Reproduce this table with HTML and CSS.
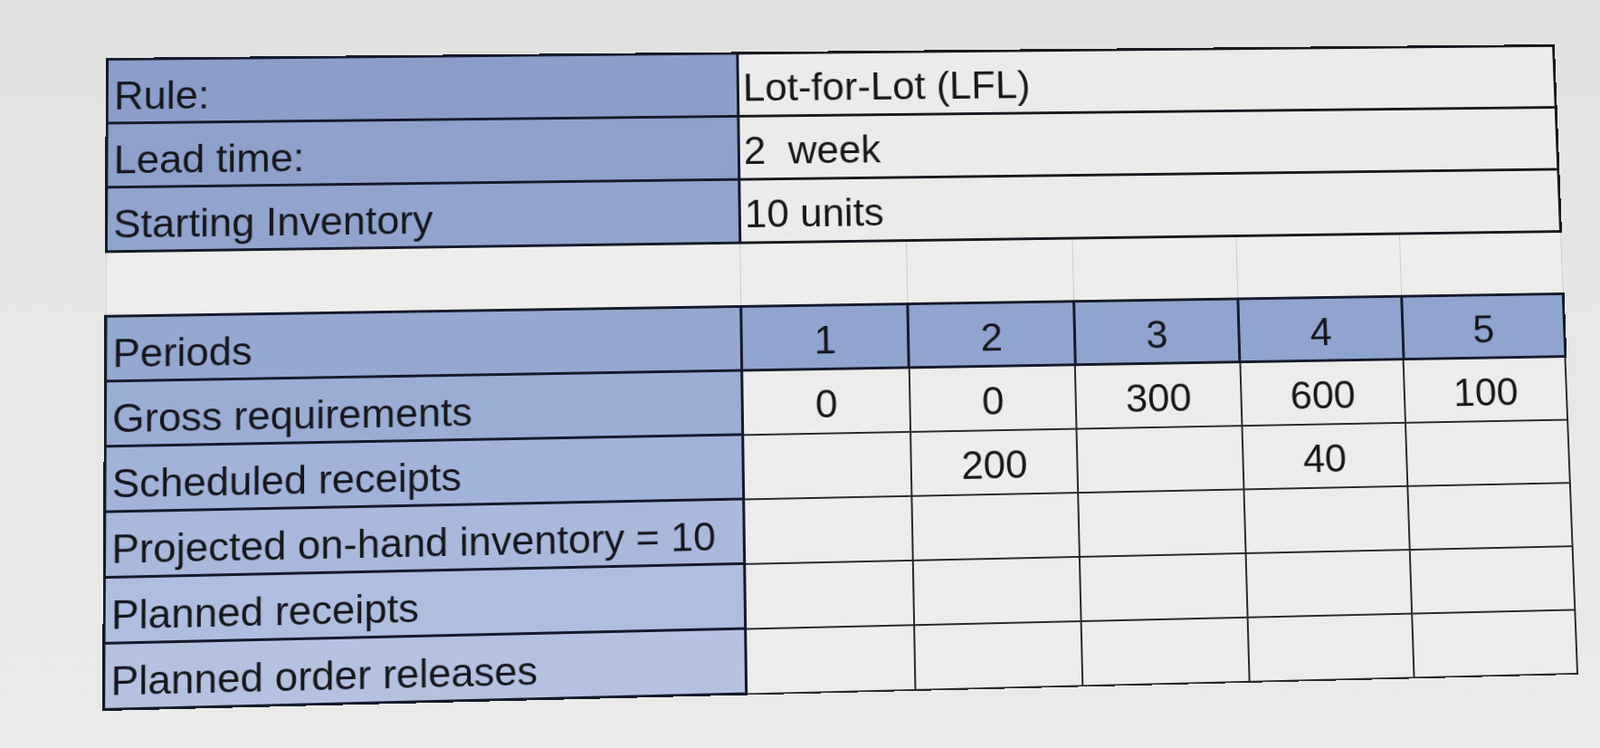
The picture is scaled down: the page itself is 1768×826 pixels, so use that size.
FILE: index.html
```html
<!DOCTYPE html>
<html lang="en">
<head>
<meta charset="utf-8">
<title>MRP Lot-for-Lot</title>
<link rel="stylesheet" href="styles.css">
</head>
<body>
<div class="screen">
  <div class="sheet">
    <table class="mrp">
      <colgroup>
        <col class="c-label">
        <col class="c-per"><col class="c-per"><col class="c-per"><col class="c-per"><col class="c-per">
      </colgroup>
      <tbody>
        <tr class="info r1">
          <th class="lbl">Rule:</th>
          <td class="val" colspan="5">Lot-for-Lot (LFL)</td>
        </tr>
        <tr class="info r2">
          <th class="lbl">Lead time:</th>
          <td class="val" colspan="5">2&nbsp; week</td>
        </tr>
        <tr class="info r3">
          <th class="lbl">Starting Inventory</th>
          <td class="val" colspan="5">10 units</td>
        </tr>
        <tr class="gap">
          <td></td><td></td><td></td><td></td><td></td><td></td>
        </tr>
        <tr class="head r4">
          <th class="lbl">Periods</th>
          <th class="per">1</th><th class="per">2</th><th class="per">3</th><th class="per">4</th><th class="per">5</th>
        </tr>
        <tr class="data r5">
          <th class="lbl">Gross requirements</th>
          <td class="num">0</td><td class="num">0</td><td class="num">300</td><td class="num">600</td><td class="num">100</td>
        </tr>
        <tr class="data r6">
          <th class="lbl">Scheduled receipts</th>
          <td class="num"></td><td class="num">200</td><td class="num"></td><td class="num">40</td><td class="num"></td>
        </tr>
        <tr class="data r7">
          <th class="lbl">Projected on-hand inventory = 10</th>
          <td class="num"></td><td class="num"></td><td class="num"></td><td class="num"></td><td class="num"></td>
        </tr>
        <tr class="data r8">
          <th class="lbl">Planned receipts</th>
          <td class="num"></td><td class="num"></td><td class="num"></td><td class="num"></td><td class="num"></td>
        </tr>
        <tr class="data r9">
          <th class="lbl">Planned order releases</th>
          <td class="num"></td><td class="num"></td><td class="num"></td><td class="num"></td><td class="num"></td>
        </tr>
      </tbody>
    </table>
  </div>
</div>
</body>
</html>
```

FILE: styles.css
```css
html, body {
  margin: 0;
  height: 100%;
}

body {
  background: linear-gradient(180deg, #e0e1df 0%, #e7e8e6 40%, #eaebe9 100%);
  font-family: "Liberation Sans", Arial, sans-serif;
  overflow: hidden;
}

.screen {
  padding: 64px 0 0 117px;
}

.sheet {
  width: 1610px;
  transform-origin: 0 0;
  transform: matrix3d(1.027229, -0.009642, 0, 0.0000217037,
                      -0.005447, 0.977668, 0, -0.0000272347,
                      0, 0, 1, 0,
                      0, 0, 0, 1);
}

.mrp {
  width: 1610px;
  border-collapse: collapse;
  table-layout: fixed;
}

.c-label {
  width: 688px;
}

.c-per {
  width: 184.4px;
}

.mrp tr {
  height: 72px;
}

.mrp th,
.mrp td {
  padding: 0;
  font-weight: normal;
  font-size: 44px;
  line-height: 44px;
  color: #15171c;
  white-space: nowrap;
  overflow: hidden;
}

/* label column */
.lbl {
  text-align: left;
  vertical-align: bottom;
  padding: 0 0 7px 6px !important;
  border: 3px solid #141a2a;
  color: #11141f;
}

.r1 .lbl { background: #8a9ec9; }
.r2 .lbl { background: #8da1cb; }
.r3 .lbl { background: #90a4cd; }
.r4 .lbl { background: #94a8d0; }
.r5 .lbl { background: #9aaed4; }
.r6 .lbl { background: #a1b3d8; }
.r7 .lbl { background: #a8b9db; }
.r8 .lbl { background: #aebede; }
.r9 .lbl { background: #b4c2e0; }

/* info values */
.val {
  text-align: left;
  vertical-align: bottom;
  padding: 0 0 9px 4px !important;
  background: #ebebe9;
  border: 3px solid #16181d;
}

/* spacer row with faint gridlines */
.gap td {
  background: #ededeb;
  border-left: 1px solid #c9cdd3;
  border-right: 1px solid #c9cdd3;
}

/* period header */
.per {
  text-align: center;
  vertical-align: middle;
  padding-top: 6px !important;
  background: #8fa4ce;
  border: 3px solid #141a2a;
  color: #151820;
}

/* data cells */
.num {
  text-align: center;
  vertical-align: middle;
  padding-top: 6px !important;
  background: #ecedeb;
  border: 2px solid #26282c;
  color: #1c1d20;
}
```
